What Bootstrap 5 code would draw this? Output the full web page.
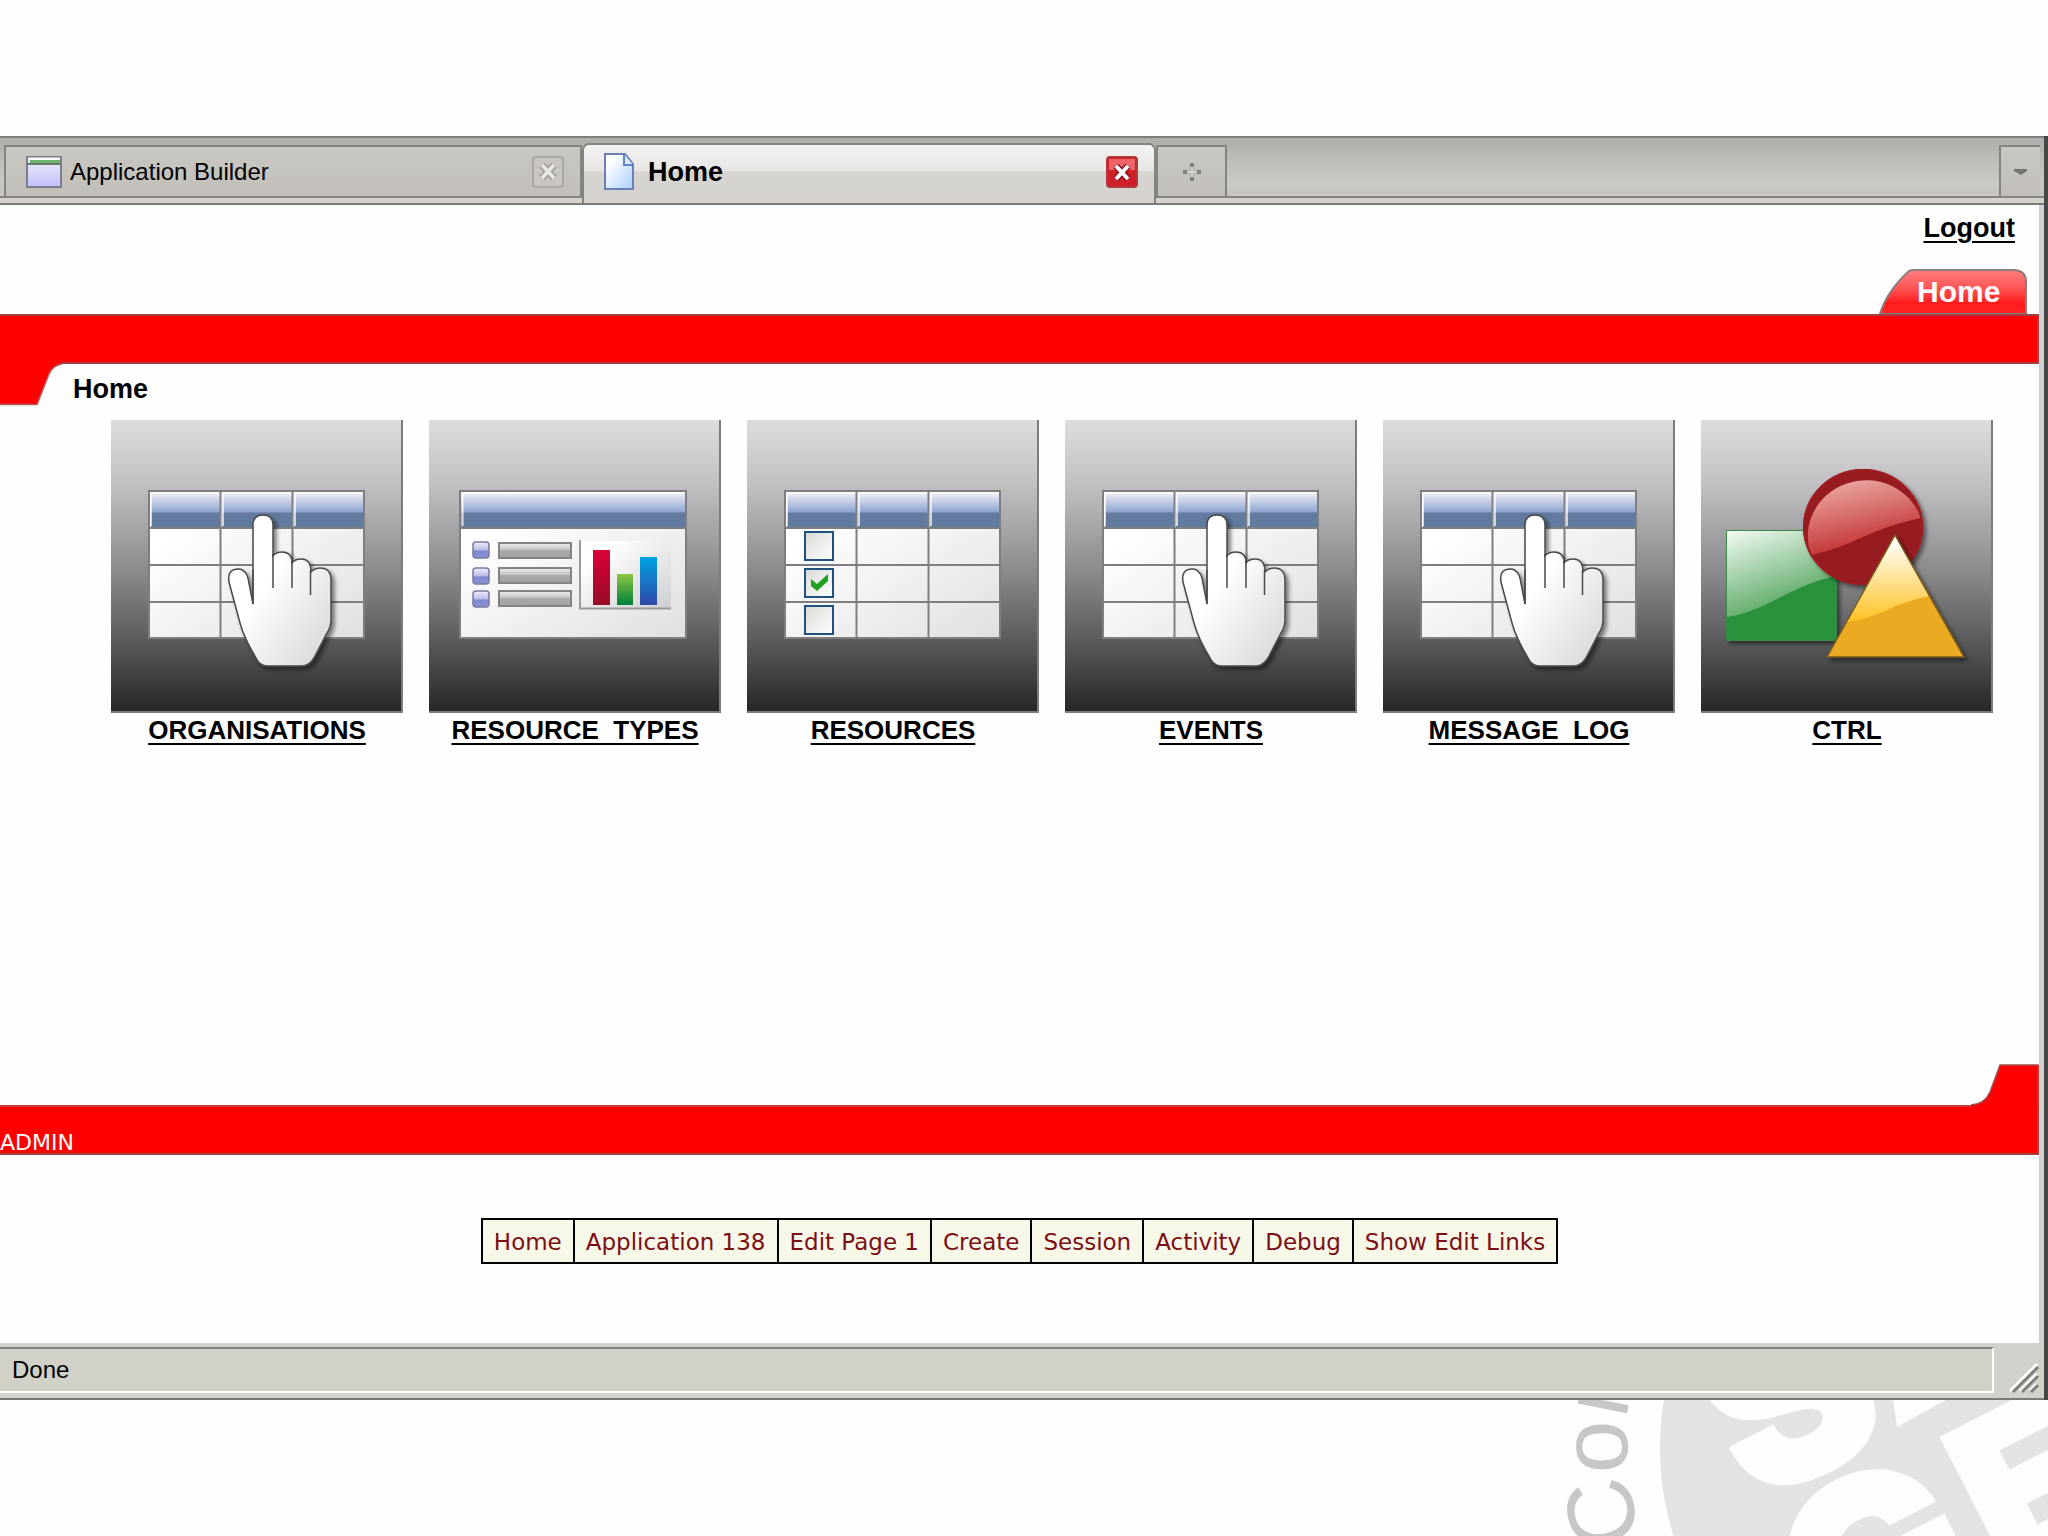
<!DOCTYPE html>
<html lang="en">
<head>
<meta charset="utf-8">
<meta name="viewport" content="width=device-width, initial-scale=1">
<title>Home</title>
<link href="https://cdn.jsdelivr.net/npm/bootstrap@5.3.0/dist/css/bootstrap.min.css" rel="stylesheet">
<style>
  body { font-family: "Liberation Sans", Arial, sans-serif; background: #fefefe; color: #000; }
  a, a:hover { color: inherit; }
  svg { display: block; }

  /* browser window */
  .app-window { margin-top: 136px; border-right: 4px solid #464646; }
  .app-frame { border-right: 5px solid #d0cfcd; }
  .tab-strip { border-top: 2px solid #7d7d7b; border-bottom: 2px solid #7d7b77; padding-bottom: 5px; margin-right: -5px;
    background: linear-gradient(#adada9, #b9b9b4 25%, #cbcac4 70%, #c6c3bd 84%, #d5d2cd 93%); }
  .tab-row { height: 60px; box-shadow: inset 0 -2px #85837f; }
  .tab-item { height: 53px; border: 2px solid #85837f; background: linear-gradient(#c9c7c2, #c2bfb9); font-size: 24px; }
  .tab-item a { line-height: 28px; }
  .tab-wide { flex: 0 1 578px; }
  .tab-live { flex-basis: 574px; height: 60px; margin-bottom: -5px; border-bottom: 0; border-radius: 7px 7px 0 0; font-weight: bold; font-size: 27px;
    background: linear-gradient(#f3f3f2, #e6e5e3 44%, #d7d5cf 46%, #d5d2cd); }
  .tab-new { width: 71px; }
  .tab-menu { width: 41px; border-right: 0; }
  .bare { border: 0; padding: 0; background: none; }

  /* page header */
  .page-bold { font-size: 27px; line-height: 32px; font-weight: bold; }
  .page-nav { padding-right: 12px; }
  .nav-tab { width: 148px; height: 45px; }
  .nav-tab svg { position: absolute; inset: 0; }
  .nav-tab a { position: relative; font-size: 30px; line-height: 45px; font-weight: bold; color: #fff; padding-left: 38px; }
  .red-bar { height: 50px; background: red; border: solid #a04040; border-width: 2px 2px 2px 0; }
  .crumb { height: 58px; margin-top: -2px; }
  .crumb-text { padding: 11px 0 0 11px; line-height: 32px; }
  .tiles { gap: 26px; padding-left: 111px; }
  .tile { width: 292px; }
  .tile a { font-size: 26px; line-height: 30px; font-weight: bold; text-underline-offset: 4px; text-decoration-thickness: 2px; }
  .tile span { padding-top: 2px; display: block; }
  .logout { text-underline-offset: 4px; text-decoration-thickness: 2px; padding: 7px 24px 25px 0; line-height: 32px; }

  /* page footer */
  .foot-bar { margin-top: -2px; border-top-color: #c04040; }
  .foot-bar p { font: 22px/20px "DejaVu Sans", Verdana, sans-serif; color: #fff; }
  .dev-area { padding: 63px 0 79px; }
  .dev-bar { border: 2px solid #000; background: #f8f8e8; }
  .dev-bar a { font: 23px/26px "DejaVu Sans", Verdana, sans-serif; color: #7b0f14; padding: 9px 11px 7px; border-left: 2px solid #000; text-decoration: none; }
  .dev-bar a:first-child { border-left: 0; }

  /* status bar */
  .status-bar { height: 57px; margin-right: -5px; padding: 4px 2px 5px 0; background: #d2d1cb; border-bottom: 2px solid #7a7975; }
  .status-text { border: 2px solid; border-color: #85837f #fff #fff transparent; border-left: 0; margin-right: 10px; font-size: 24px; line-height: 42px; padding-left: 12px; background: #d1d1c7; }
  .under { height: 136px; }
</style>
<script src="https://cdn.jsdelivr.net/npm/bootstrap@5.3.0/dist/js/bootstrap.bundle.min.js"></script>
</head>
<body class="min-vh-100 d-flex flex-column overflow-x-hidden">

<svg width="0" height="0" class="position-absolute" aria-hidden="true">
  <defs>
    <linearGradient id="gTile" x1="0" y1="0" x2="0" y2="1"><stop offset="0" stop-color="#dedcdf"/><stop offset=".24" stop-color="#bdbdbf"/><stop offset=".5" stop-color="#8e8e90"/><stop offset=".75" stop-color="#5d5d5f"/><stop offset="1" stop-color="#272528"/></linearGradient>
    <linearGradient id="gHead" x1="0" y1="0" x2="0" y2="1"><stop offset="0" stop-color="#f4f4f8"/><stop offset=".57" stop-color="#8fa3cf"/><stop offset=".6" stop-color="#647a9e"/><stop offset="1" stop-color="#5f7b9f"/></linearGradient>
    <linearGradient id="gSheet" x1="0" y1="0" x2="1" y2="1"><stop offset=".2" stop-color="#fff"/><stop offset="1" stop-color="#e0e0e2"/></linearGradient>
    <linearGradient id="gHand" x1="0" y1="0" x2="1" y2="1"><stop offset=".4" stop-color="#fff"/><stop offset="1" stop-color="#d4d4d6"/></linearGradient>
    <linearGradient id="gBullet" x1="0" y1="0" x2="0" y2="1"><stop offset="0" stop-color="#f0f0fb"/><stop offset=".5" stop-color="#b9bce8"/><stop offset=".55" stop-color="#8088cf"/><stop offset="1" stop-color="#8a92d8"/></linearGradient>
    <linearGradient id="gField" x1="0" y1="0" x2="0" y2="1"><stop offset="0" stop-color="#eee"/><stop offset=".45" stop-color="#c4c4c6"/><stop offset=".5" stop-color="#aaa"/><stop offset="1" stop-color="#a2a2a4"/></linearGradient>
    <linearGradient id="gChart" x1="0" y1="0" x2="1" y2="1"><stop offset=".2" stop-color="#fff"/><stop offset="1" stop-color="#cfcfd1"/></linearGradient>
    <linearGradient id="gR" x1="0" y1="0" x2="0" y2="1"><stop offset="0" stop-color="#dc0035"/><stop offset="1" stop-color="#980c28"/></linearGradient>
    <linearGradient id="gG" x1="0" y1="0" x2="0" y2="1"><stop offset="0" stop-color="#8cc63f"/><stop offset="1" stop-color="#00803c"/></linearGradient>
    <linearGradient id="gB" x1="0" y1="0" x2="0" y2="1"><stop offset="0" stop-color="#00a3e4"/><stop offset="1" stop-color="#3048a8"/></linearGradient>
    <linearGradient id="gGreen" x1="0" y1="0" x2=".45" y2="1"><stop offset="0" stop-color="#f2faf3"/><stop offset="1" stop-color="#4fa35a"/></linearGradient>
    <linearGradient id="gRed" x1=".25" y1="0" x2=".6" y2="1"><stop offset="0" stop-color="#eba9a5"/><stop offset="1" stop-color="#be2424"/></linearGradient>
    <linearGradient id="gYel" x1="0" y1="0" x2="0" y2="1"><stop offset=".1" stop-color="#fffdf5"/><stop offset="1" stop-color="#ffc222"/></linearGradient>
    <linearGradient id="gBox" x1="0" y1="0" x2="1" y2="1"><stop offset="0" stop-color="#d9d9d4"/><stop offset="1" stop-color="#fff"/></linearGradient>
    <linearGradient id="gNav" x1="0" y1="0" x2="0" y2="1"><stop offset=".1" stop-color="#ff7676"/><stop offset=".45" stop-color="#ff5050"/><stop offset=".75" stop-color="#ff1c1c"/><stop offset="1" stop-color="#fd2222"/></linearGradient>
    <filter id="shade" x="-20%" y="-20%" width="150%" height="150%"><feDropShadow dx="3" dy="3" stdDeviation="2" flood-color="#000" flood-opacity=".5"/></filter>

    <g id="tileBack"><rect width="292" height="293" fill="#7c7c7e"/><rect width="290" height="291" fill="url(#gTile)"/></g>
    <g id="grid">
      <rect x="38" y="71" width="215" height="147" fill="url(#gSheet)"/>
      <g fill="url(#gHead)"><rect x="40" y="72" width="69" height="35"/><rect x="111" y="72" width="70" height="35"/><rect x="183" y="72" width="70" height="35"/></g>
      <path d="M40 106V73H108M112 106V73H180M184 106V73H252" fill="none" stroke="#fff" stroke-opacity=".7" stroke-width="2"/>
      <path d="M38 71H253V218H38ZM109.500 71V218M181.500 71V218M38 108H253M38 145H253M38 182H253" fill="none" stroke="#7e7e80" stroke-width="2"/>
    </g>
    <symbol id="tileHand" viewBox="0 0 292 293">
      <use href="#tileBack"/><use href="#grid"/>
      <path filter="url(#shade)" d="M142 184V105Q142 95 152 95T162 105V136Q165 132 171 132Q181 132 181 143Q184 139 190 139Q200 139 200 152Q204 148 209 148Q220 148 220 160V200Q220 207 216 213L203 238Q198 246 191 246H156Q149 246 145 238Q133 218 129 203L118 162Q116 150 126 149Q134 148 137 158Z" fill="url(#gHand)" stroke="#4a4a4c" stroke-width="1.500"/>
      <path d="M162 134V168M181 141V168M199.500 150V175M142 150V184" fill="none" stroke="#4a4a4c" stroke-width="1.500"/>
    </symbol>
    <symbol id="tileForm" viewBox="0 0 292 293">
      <use href="#tileBack"/>
      <rect x="31" y="71" width="226" height="147" fill="url(#gSheet)"/>
      <rect x="32" y="72" width="225" height="35" fill="url(#gHead)"/>
      <path d="M33.500 106V73H256" fill="none" stroke="#fff" stroke-opacity=".8" stroke-width="2"/>
      <path d="M31 71H257V218H31ZM31 108H257" fill="none" stroke="#7e7e80" stroke-width="2"/>
      <g fill="url(#gBullet)" stroke="#777b9c" stroke-width="1.500"><rect x="44" y="122" width="16" height="16" rx="3"/><rect x="44" y="148" width="16" height="16" rx="3"/><rect x="44" y="171" width="16" height="16" rx="3"/></g>
      <g fill="url(#gField)" stroke="#838385" stroke-width="2"><rect x="70" y="123" width="72" height="15"/><rect x="70" y="148" width="72" height="15"/><rect x="70" y="171" width="72" height="15"/></g>
      <rect x="151" y="121" width="91" height="67" fill="url(#gChart)"/>
      <path d="M151 120V188.500H242" fill="none" stroke="#9a9a9c" stroke-width="2"/>
      <rect x="164" y="130" width="17" height="55" fill="url(#gR)"/><rect x="188" y="154" width="16" height="31" fill="url(#gG)"/><rect x="211" y="137" width="17" height="48" fill="url(#gB)"/>
    </symbol>
    <symbol id="tileCheck" viewBox="0 0 292 293">
      <use href="#tileBack"/><use href="#grid"/>
      <g fill="url(#gBox)" stroke="#1c5180" stroke-width="2"><rect x="58" y="112" width="28" height="28"/><rect x="58" y="149" width="28" height="28"/><rect x="58" y="186" width="28" height="28"/></g>
      <path d="M64 159L70 164L81 154V161L70 171L64 166Z" fill="#21a121"/>
    </symbol>
    <symbol id="tileShapes" viewBox="0 0 292 293">
      <use href="#tileBack"/>
      <g filter="url(#shade)"><rect x="25" y="110" width="111" height="111" fill="#2b913d"/><path d="M26 111H136V156Q112 160 80 177T26 197Z" fill="url(#gGreen)"/><rect x="25.500" y="110.500" width="110" height="110" fill="none" stroke="#3c8a4a"/></g>
      <g filter="url(#shade)"><ellipse cx="162" cy="107" rx="60" ry="58" fill="#971c20"/><path d="M110 135A58 56 0 1 1 220 98Q190 104 162 117T110 135Z" fill="url(#gRed)"/><ellipse cx="162" cy="107" rx="59" ry="57" fill="none" stroke="#a01a22" stroke-width="2"/></g>
      <g filter="url(#shade)"><path d="M194 115L263 237H126Z" fill="#eaaa24"/><path d="M194 115L228 176Q205 181 186 190T146 202Z" fill="url(#gYel)"/><path d="M194 115L263 237H126Z" fill="none" stroke="#7a5a1c" stroke-width="1.500"/></g>
    </symbol>
  </defs>
</svg>

<div class="app-window flex-grow-1 d-flex flex-column">
 <div class="app-frame flex-grow-1 d-flex flex-column">

  <nav class="tab-strip" aria-label="Browser tabs">
    <div class="tab-row d-flex align-items-end">
      <div class="tab-item tab-wide d-flex align-items-center ms-1">
        <svg class="ms-3 me-2" width="40" height="34" viewBox="0 0 40 34" aria-hidden="true">
          <defs><linearGradient id="gApp" x1="0" y1="0" x2="0" y2="1"><stop offset="0" stop-color="#efeff8"/><stop offset="1" stop-color="#c3c1fb"/></linearGradient></defs>
          <rect x="5" y="2" width="34" height="30" fill="url(#gApp)" stroke="#7b7d8c" stroke-width="2"/><path d="M6 4H38" stroke="#fff" stroke-width="3"/><path d="M8 6.500H38" stroke="#6db36f" stroke-width="3"/><path d="M5 9H39" stroke="#6b7a6e" stroke-width="2"/>
        </svg>
        <a href="#" class="text-decoration-none">Application Builder</a>
        <button class="bare ms-auto me-3" aria-label="Close Application Builder">
          <svg width="32" height="32" viewBox="0 0 32 32"><rect x="1" y="1" width="30" height="30" rx="3" fill="#c9c6c2" stroke="#aaa7a4" stroke-width="2"/><path d="M10 9L22 22M22 9L10 22" stroke="#9d9a98" stroke-width="7"/><path d="M10 9L22 22M22 9L10 22" stroke="#e8e6e4" stroke-width="4"/></svg>
        </button>
      </div>
      <div class="tab-item tab-wide tab-live d-flex align-items-center pb-1">
        <svg class="ms-3 me-2" width="36" height="38" viewBox="0 0 36 38" aria-hidden="true">
          <defs><linearGradient id="gDoc" x1="0" y1="0" x2="1" y2="1"><stop offset=".2" stop-color="#fff"/><stop offset="1" stop-color="#a9d0ff"/></linearGradient></defs>
          <path d="M5 1H25L33 11V36H5Z" fill="url(#gDoc)" stroke="#6a7fb8" stroke-width="2"/><path d="M24 1V12H33" fill="#dcebff" stroke="#5d86c8" stroke-width="2"/>
        </svg>
        <a href="#" class="text-decoration-none ps-1" aria-current="page">Home</a>
        <button class="bare ms-auto me-3" aria-label="Close Home">
          <svg width="32" height="32" viewBox="0 0 32 32"><rect x="1" y="1" width="30" height="30" rx="3" fill="#cf2029" stroke="#b0383c" stroke-width="2"/><path d="M3 3H29V14H3Z" fill="#ef6467"/><path d="M10 10L22 23M22 10L10 23" stroke="#8a1018" stroke-width="7"/><path d="M10 10L22 23M22 10L10 23" stroke="#fff" stroke-width="4"/></svg>
        </button>
      </div>
      <button class="tab-item tab-new d-flex align-items-center justify-content-center p-0" aria-label="New tab">
        <svg width="18" height="20" viewBox="0 0 18 20"><path d="M9 1V19M0 10H18" stroke="#83817e" stroke-width="4"/><path d="M9 5V15M4 10H14" stroke="#d4d2ce" stroke-width="3"/></svg>
      </button>
      <button class="tab-item tab-menu d-flex align-items-center justify-content-center p-0 ms-auto me-1" aria-label="List tabs">
        <svg width="13" height="7" viewBox="0 0 13 7"><path d="M0 1H13V3L7 7L0 3Z" fill="#75736f"/></svg>
      </button>
    </div>
  </nav>

  <header>
    <div class="logout page-bold text-end"><a href="#">Logout</a></div>
    <nav class="page-nav d-flex justify-content-end" aria-label="Pages">
      <div class="nav-tab position-relative">
        <svg width="148" height="45" viewBox="0 0 148 45" aria-hidden="true"><path d="M1 45C6 28 18 13 30 2Q32 1 35 1H136Q147 2 147 13V45Z" fill="url(#gNav)" stroke="#8e7d7d" stroke-width="2"/></svg>
        <a href="#" class="d-block text-decoration-none">Home</a>
      </div>
    </nav>
    <div class="red-bar"></div>
    <div class="crumb d-flex">
      <svg width="62" height="44" viewBox="0 0 62 44" aria-hidden="true"><path d="M0 0H62V2Q53 3 49 12L37 43H0Z" fill="red"/><path d="M62 2Q53 3 49 12L37 42.500H0" fill="none" stroke="#b06060" stroke-width="1.500"/></svg>
      <h1 class="crumb-text page-bold m-0">Home</h1>
    </div>
  </header>

  <main class="flex-grow-1">
    <div class="tiles d-flex text-center">
      <div class="tile"><a href="#"><svg width="292" height="293"><use href="#tileHand"/></svg><span>ORGANISATIONS</span></a></div>
      <div class="tile"><a href="#"><svg width="292" height="293"><use href="#tileForm"/></svg><span>RESOURCE&nbsp; TYPES</span></a></div>
      <div class="tile"><a href="#"><svg width="292" height="293"><use href="#tileCheck"/></svg><span>RESOURCES</span></a></div>
      <div class="tile"><a href="#"><svg width="292" height="293"><use href="#tileHand"/></svg><span>EVENTS</span></a></div>
      <div class="tile"><a href="#"><svg width="292" height="293"><use href="#tileHand"/></svg><span>MESSAGE&nbsp; LOG</span></a></div>
      <div class="tile"><a href="#"><svg width="292" height="293"><use href="#tileShapes"/></svg><span>CTRL</span></a></div>
    </div>
  </main>

  <footer>
    <svg class="ms-auto" width="68" height="43" viewBox="0 0 68 43" aria-hidden="true"><path d="M0 43V41Q14 40 19 28L29 1H68V43Z" fill="red"/><path d="M0 41Q14 40 19 28L29 1H67V43" fill="none" stroke="#a05050" stroke-width="1.500"/></svg>
    <div class="foot-bar red-bar d-flex align-items-end"><p class="m-0">ADMIN</p></div>
    <div class="dev-area d-flex justify-content-center">
      <nav class="dev-bar d-flex" aria-label="Developer toolbar">
        <a href="#">Home</a><a href="#">Application 138</a><a href="#">Edit Page 1</a><a href="#">Create</a><a href="#">Session</a><a href="#">Activity</a><a href="#">Debug</a><a href="#">Show Edit Links</a>
      </nav>
    </div>
    <div class="status-bar d-flex">
      <div class="status-text flex-grow-1" role="status">Done</div>
      <svg class="align-self-end" width="38" height="34" viewBox="0 0 38 34" aria-hidden="true"><path d="M6 32L33 5M16 32L33 15M26 32L33 25" stroke="#fff" stroke-width="3"/><path d="M9 33L34 8M18 33L34 17M27 33L34 26" stroke="#7f7d79" stroke-width="3"/></svg>
    </div>
  </footer>
 </div>
</div>

<div class="under d-flex justify-content-end">
  <svg width="508" height="136" viewBox="1540 1400 508 136">
    <defs><path id="ring" d="M1642 1540A321 321 0 0 1 1721 1217"/></defs>
    <circle cx="1950" cy="1448" r="290" fill="#e4e2e3"/>
    <text font-family="Liberation Sans, Arial, sans-serif" font-size="95" fill="#c8c6c7"><textPath href="#ring">Com</textPath></text>
    <g font-family="Inter, Liberation Sans, sans-serif" font-weight="900" font-size="240" fill="#fdfdfd" stroke="#fdfdfd" stroke-width="5">
      <text transform="translate(1754 1506) rotate(-27)">S</text>
      <text transform="translate(1834 1682) rotate(-27)">G</text>
      <text transform="translate(2005 1582) rotate(-27)" font-size="215">E</text>
    </g>
    <path d="M1893 1400L1897 1427L1946 1400Z" fill="#fdfdfd"/>
  </svg>
</div>
</body>
</html>
